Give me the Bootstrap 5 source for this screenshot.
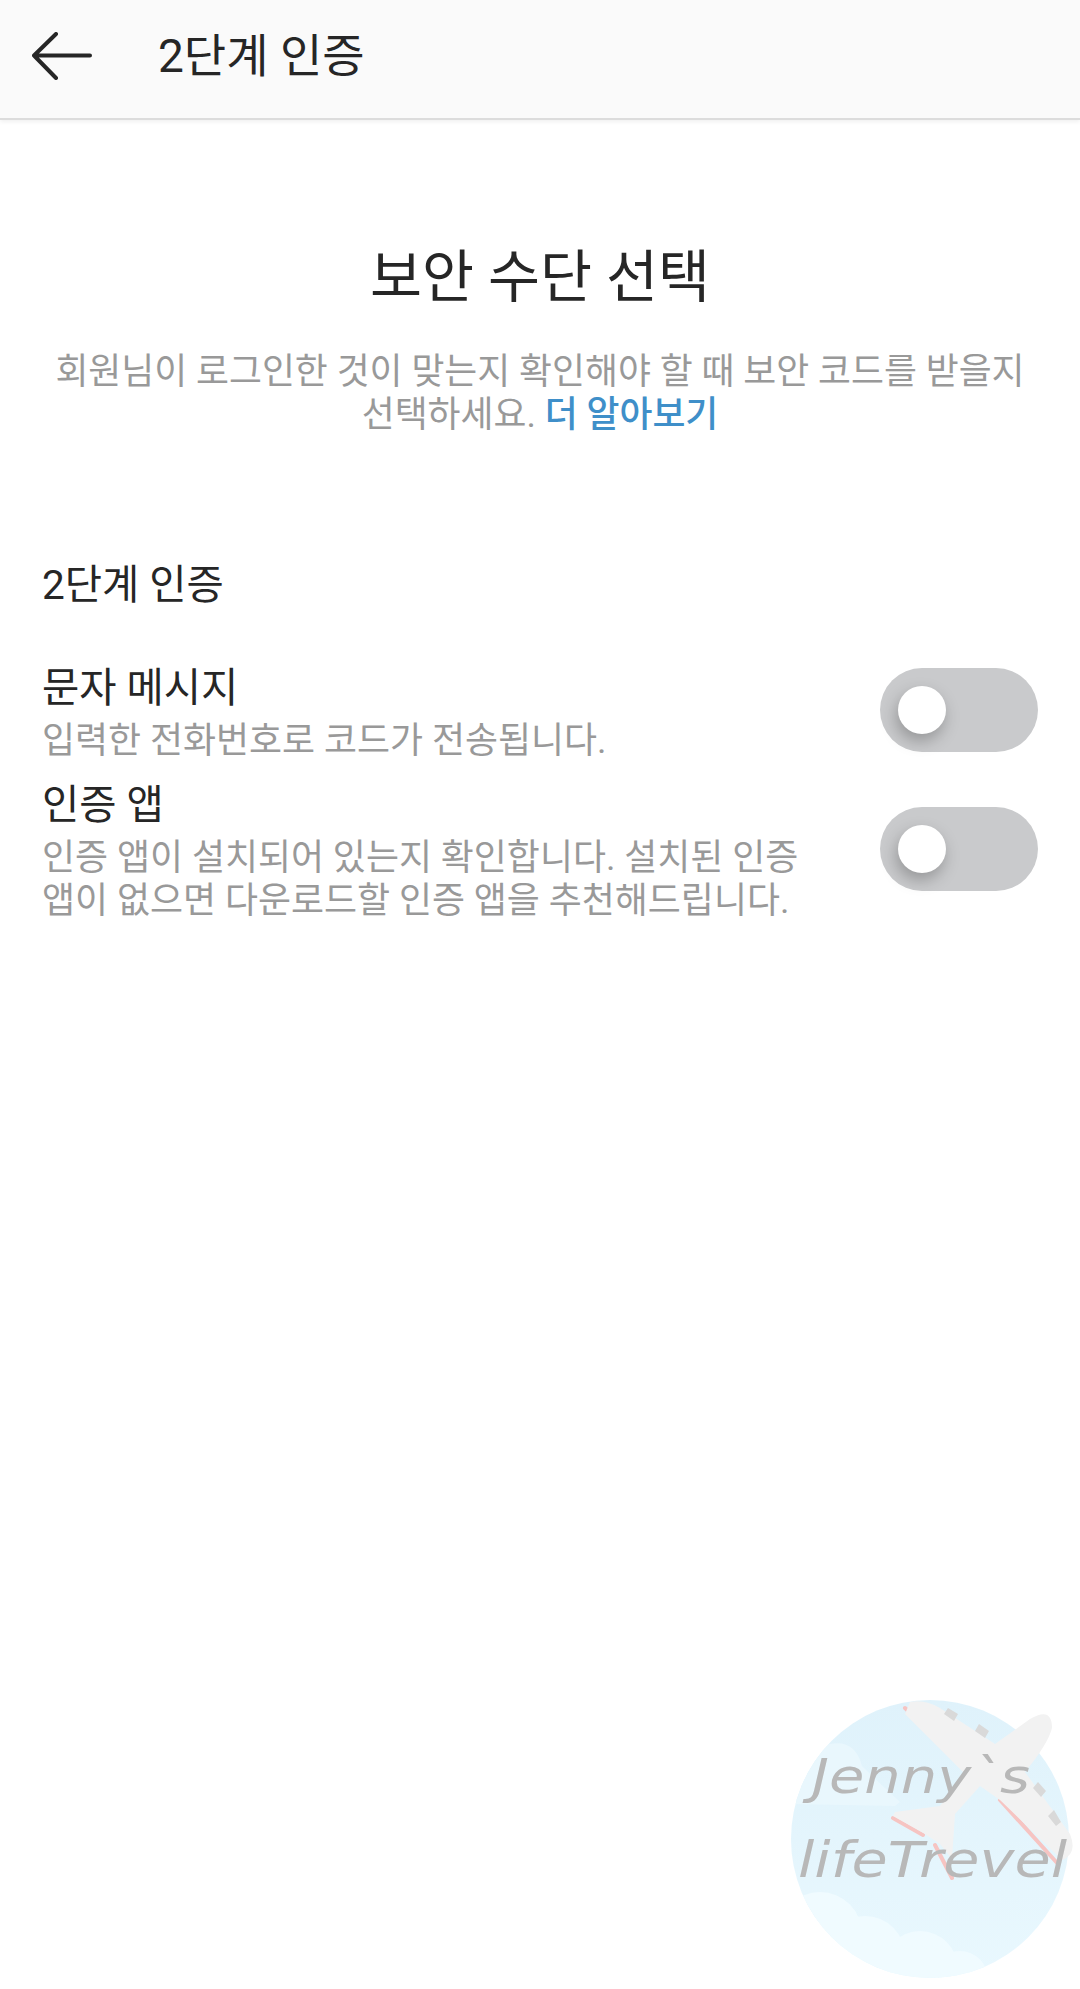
<!DOCTYPE html>
<html lang="ko">
<head>
<meta charset="utf-8">
<title>2단계 인증</title>
<link href="https://cdn.jsdelivr.net/npm/bootstrap@5.3.0/dist/css/bootstrap.min.css" rel="stylesheet">
<style>
html,body{height:100%;}
body{font-family:Roboto,"Noto Sans CJK KR",sans-serif;background:#fff;color:#262626;position:relative;overflow:hidden;}
.top-bar{height:120px;background:#fafafa;border-bottom:2px solid #dcdcdc;box-shadow:0 2px 4px rgba(0,0,0,.06);padding-left:32px;gap:66px;padding-bottom:6px;}
.top-title{font-size:46px;line-height:1;font-weight:400;margin:0;}
.intro{padding:122px 41px 0;}
.intro-h{font-size:56.500px;line-height:72px;font-weight:400;margin:0 0 37px;color:#262626;}
.intro-p{font-size:35.800px;line-height:43px;color:#999;margin:0;}
.intro-p a{color:#3f8fc9;font-weight:500;text-decoration:none;}
.sect{padding:0 42px;margin-top:122px;}
.sect-h{font-size:40.500px;line-height:52px;margin:0 0 46px;font-weight:400;}
.opt{justify-content:space-between;margin-bottom:11px;}
.opt-t{font-size:40.500px;line-height:63px;color:#262626;margin:0;}
.opt-d{font-size:35.900px;line-height:43px;color:#999;margin:0;width:770px;}
.tog{width:158px;height:84px;border-radius:42px;background:#c9cacc;flex:none;position:relative;}
.tog::after{content:"";position:absolute;left:18px;top:18px;width:48px;height:48px;border-radius:50%;background:#fff;box-shadow:-2px 7px 16px rgba(0,0,0,.26);}
.wm{position:absolute;left:790px;top:1694px;filter:blur(.7px);}
</style>
</head>
<body>
<header class="top-bar d-flex align-items-center">
  <svg width="60" height="48" viewBox="0 0 60 48" fill="none" stroke="#262626" stroke-width="4" stroke-linecap="round" stroke-linejoin="round"><path d="M2 23.500H58M24 2 2 23.500 24 46"/></svg>
  <h1 class="top-title">2단계 인증</h1>
</header>
<main>
  <section class="intro text-center">
    <h2 class="intro-h">보안 수단 선택</h2>
    <p class="intro-p">회원님이 로그인한 것이 맞는지 확인해야 할 때 보안 코드를 받을지 선택하세요. <a href="#">더 알아보기</a></p>
  </section>
  <section class="sect">
    <h3 class="sect-h">2단계 인증</h3>
    <div class="opt d-flex align-items-center">
      <div><p class="opt-t">문자 메시지</p><p class="opt-d">입력한 전화번호로 코드가 전송됩니다.</p></div>
      <div class="tog"></div>
    </div>
    <div class="opt d-flex align-items-center">
      <div><p class="opt-t">인증 앱</p><p class="opt-d">인증 앱이 설치되어 있는지 확인합니다. 설치된 인증 앱이 없으면 다운로드할 인증 앱을 추천해드립니다.</p></div>
      <div class="tog"></div>
    </div>
  </section>
</main>
<svg class="wm" width="300" height="290" viewBox="0 0 300 290">
  <defs>
    <clipPath id="cc"><circle cx="140" cy="145" r="139"/></clipPath>
    <linearGradient id="sky" x1="0" y1="0" x2="0" y2="1"><stop offset="0" stop-color="#dff2fb"/><stop offset="1" stop-color="#e9f8fe"/></linearGradient>
  </defs>
  <circle cx="140" cy="145" r="139" fill="url(#sky)"/>
  <g clip-path="url(#cc)" fill="#f0fbff">
    <circle cx="30" cy="240" r="42"/><circle cx="75" cy="262" r="40"/><circle cx="130" cy="275" r="38"/><circle cx="170" cy="285" r="28"/>
    <path d="M0 110V70Q20 52 40 50Q65 45 72 72Q85 85 110 108L105 112Z" fill="#e9f7fd"/>
  </g>
  <path d="M115 14 180 76M210 106 268 170M103 124 133 141M145 151 162 184" stroke="#f6c4c2" stroke-width="4" fill="none" stroke-linecap="round"/>
  <path d="M120 8Q135 5 150 14L205 50 240 25Q262 12 262 34 258 50 235 78L280 140Q288 160 272 166L210 106 190 92 165 120 162 165 150 150 135 140 103 122 105 118 150 112 175 80 115 20Z" fill="#f2f2f2"/>
  <path d="M158 14 168 20 164 27 154 20ZM189 30 199 37 195 44 185 37ZM248 88 256 97 251 103 243 94ZM264 116 271 128 266 132 258 122Z" fill="#d9d9d9"/>
  <g fill="#b8b8b8" font-family="'DejaVu Sans',sans-serif" font-style="italic">
    <text x="22" y="99" font-size="48" textLength="218" lengthAdjust="spacingAndGlyphs">Jenny`s</text>
    <text x="8" y="183" font-size="50" textLength="269" lengthAdjust="spacingAndGlyphs">lifeTrevel</text>
  </g>
</svg>
</body>
</html>
